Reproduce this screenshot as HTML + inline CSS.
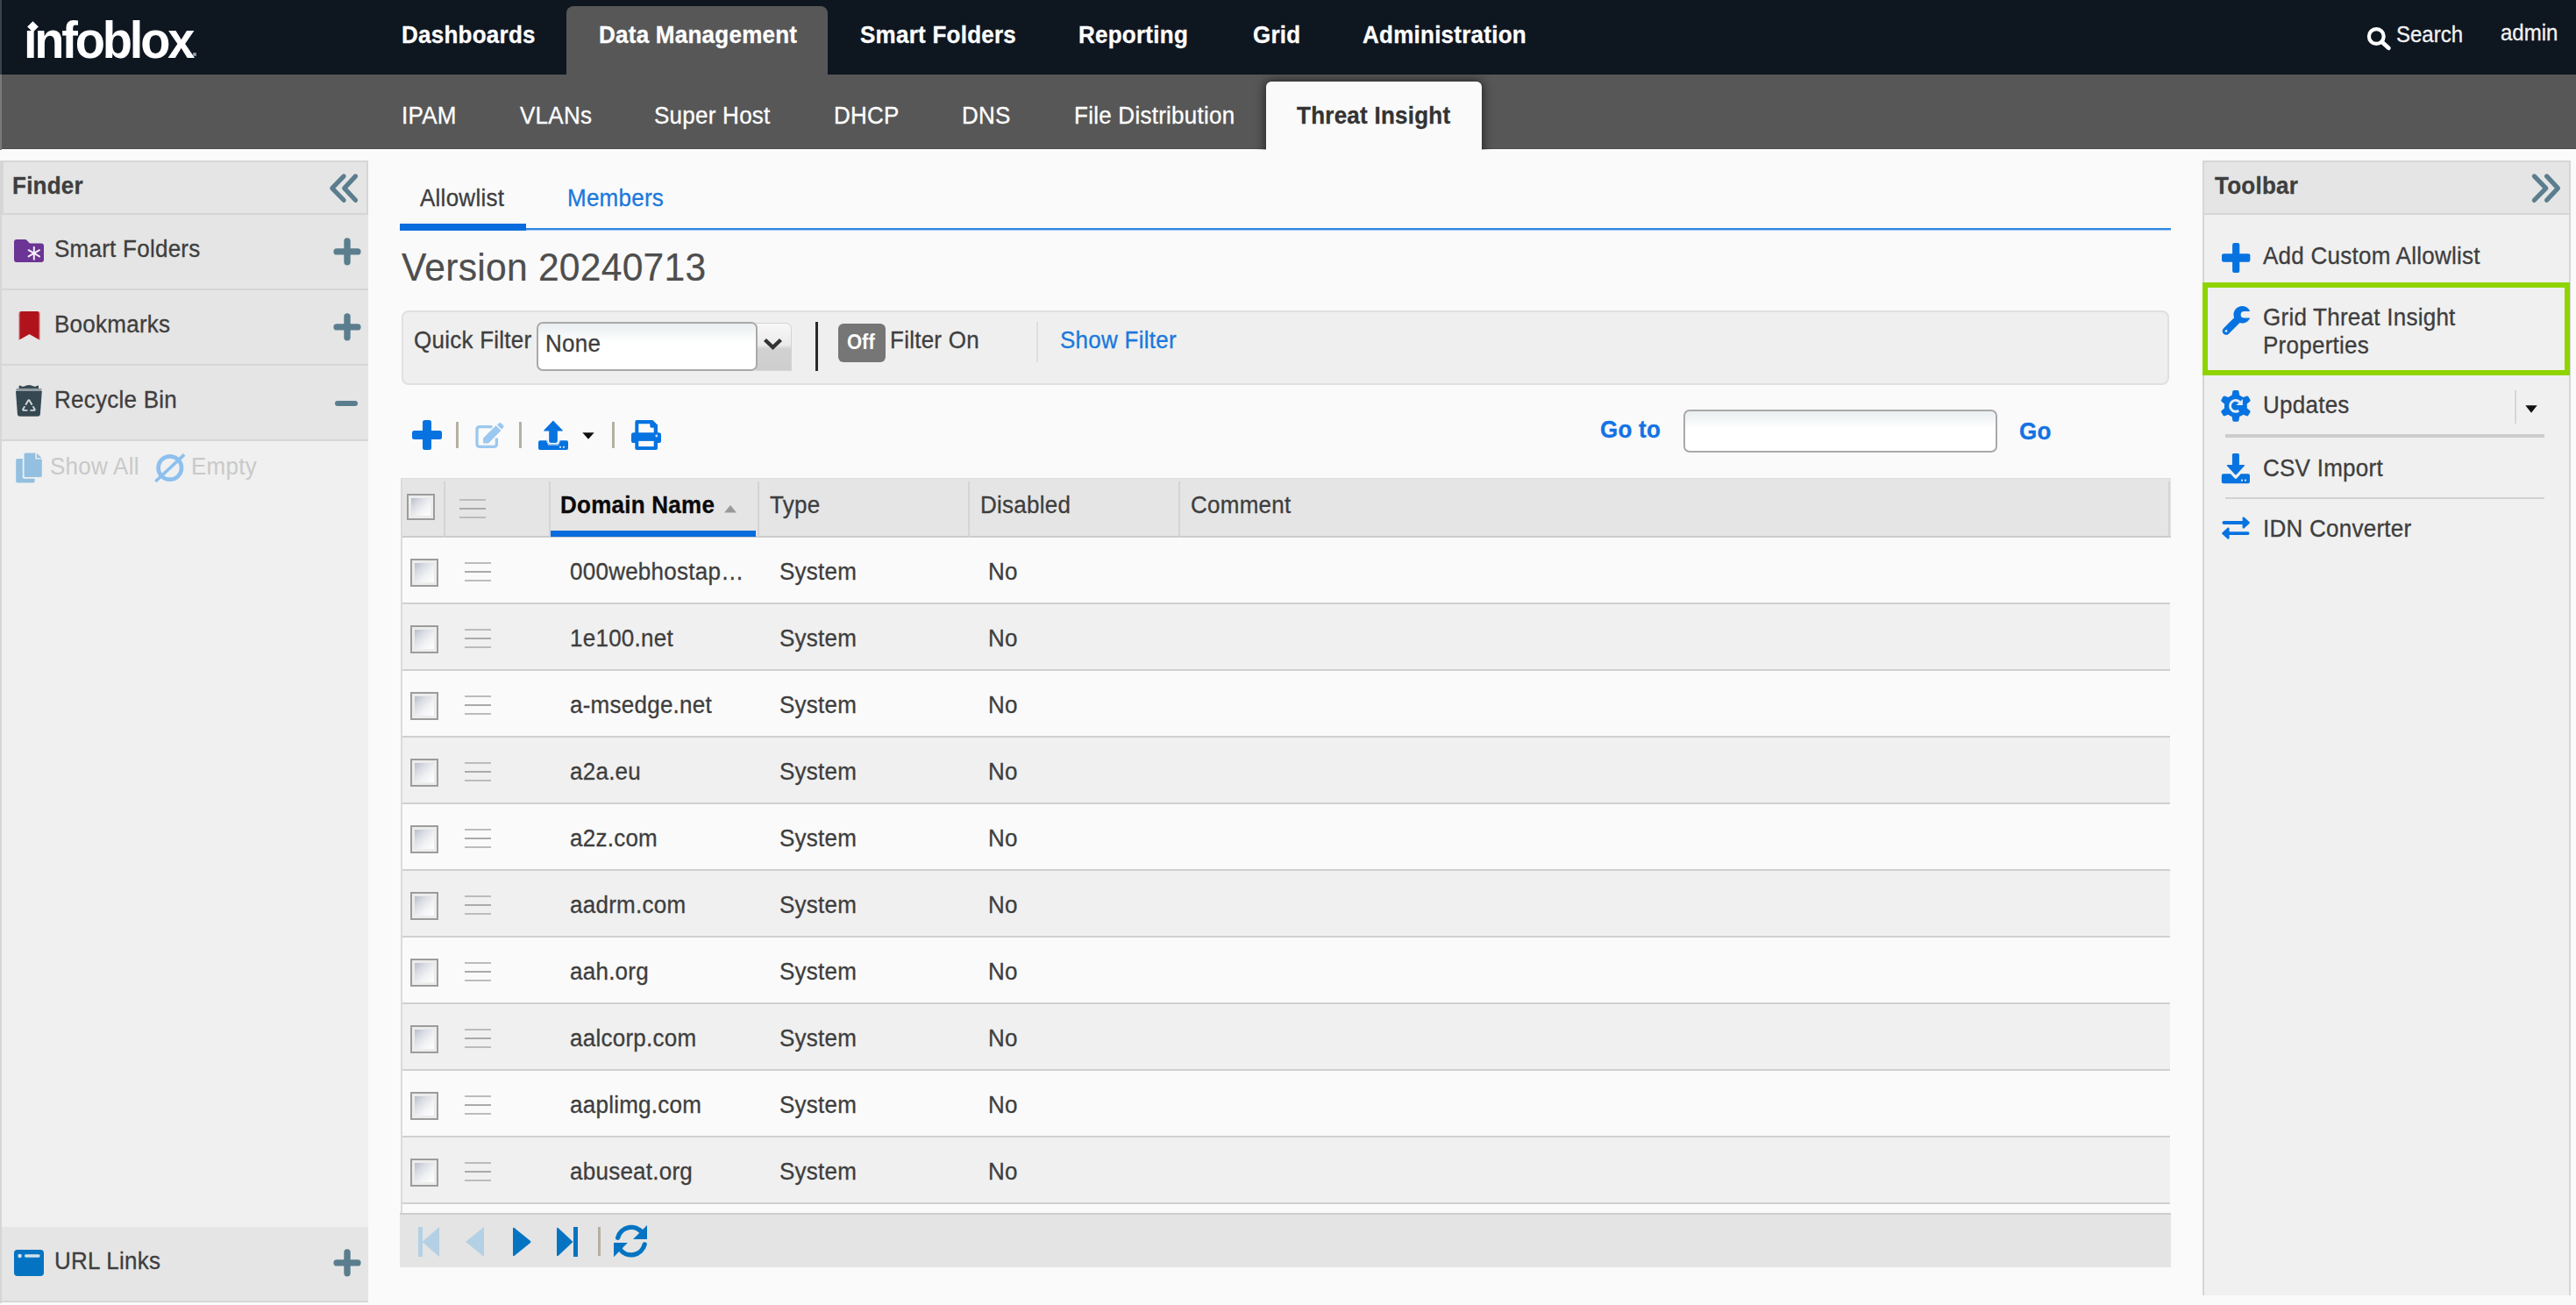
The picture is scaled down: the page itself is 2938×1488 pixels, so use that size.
<!DOCTYPE html>
<html lang="en">
<head>
<meta charset="utf-8">
<title>Infoblox - Threat Insight</title>
<style>
*{box-sizing:border-box;margin:0;padding:0}
html,body{width:2938px;height:1488px;overflow:hidden;background:#fafafa}
body{font-family:"Liberation Sans",Arial,sans-serif;font-size:26px;color:#3b3b3b;position:relative}
.a{position:absolute}
.t{position:absolute;white-space:nowrap;line-height:26px;height:26px;letter-spacing:.25px;margin-top:0;-webkit-text-stroke:.3px;transform:scaleY(1.06);transform-origin:0 22px}
.b{font-weight:bold}
svg{position:absolute;display:block;overflow:visible}
#hdr{left:0;top:0;width:2938px;height:85px;background:#0e1620}
#sub{left:0;top:85px;width:2938px;height:85px;background:#575757;border-bottom:1px solid #4b4b4b}
#edge1{left:0;top:0;width:2px;height:85px;background:#3b424c}
#edge2{left:0;top:85px;width:2px;height:86px;background:#7a7a7a}
#mtab{left:646px;top:7px;width:298px;height:80px;background:#575757;border-radius:8px 8px 0 0}
#subclip{left:0;top:85px;width:2938px;height:86px;overflow:hidden}
#stab{left:1444px;top:8px;width:246px;height:100px;background:#fafafa;border-radius:6px 6px 0 0;box-shadow:0 0 12px 1px rgba(0,0,0,.6)}
.nav{color:#fff;font-weight:bold;top:27px}
.snav{color:#fff;top:119px}
.ph{background:#e5e5e5;border:2px solid #d6d6d6}
.pb{background:#f0f0f0}
.prow{left:2px;width:418px;height:86px;background:#e5e5e5;border-bottom:2px solid #d6d6d6}
.dk{color:#3e3e3e}
.blue{color:#1a78dc}
.row{left:459px;width:2016px;height:76px;border-bottom:2px solid #d0d0d0}
.r0{background:#fafafa}.r1{background:#f0f0f0}
.cb{position:absolute;width:32px;height:32px;border:2px solid #9c9c9c;background:#ececec;padding:3px}
.cb i{display:block;width:100%;height:100%;background:linear-gradient(135deg,#b7bdc9 0%,#d9dce3 30%,#f1f2f4 62%,#ffffff 100%)}
.hb{position:absolute;width:30px;height:22px;border-top:2px solid #bcbcbc;border-bottom:2px solid #bcbcbc}
.hb:after{content:"";position:absolute;left:0;top:8px;width:30px;height:2px;background:#aaa}
.vsep{position:absolute;width:3px;background:#b5b0a2}
.cs{position:absolute;top:549px;width:2px;height:63px;background:#d4d4d4}
</style>
</head>
<body>
<div id="hdr" class="a"></div><div id="sub" class="a"></div><div id="edge1" class="a"></div><div id="edge2" class="a"></div>
<div id="mtab" class="a"></div><div id="subclip" class="a"><div id="stab" class="a"></div></div>
<div id="logo" class="t b" style="left:27px;top:15px;font-size:56px;line-height:60px;height:60px;margin-top:0;-webkit-text-stroke:0;color:#fff;letter-spacing:-3.2px">infoblox</div>
<div class="a" style="left:29px;top:22px;width:15px;height:13px;background:#0e1620"></div>
<div class="a" style="left:32.5px;top:25.5px;width:9px;height:9px;background:#fff;transform:rotate(45deg)"></div>
<div class="a" style="left:220px;top:60px;width:4px;height:4px;border-radius:1px;background:#8d9399"></div>
<div class="t nav" style="left:458px">Dashboards</div>
<div class="t nav" style="left:683px">Data Management</div>
<div class="t nav" style="left:981px">Smart Folders</div>
<div class="t nav" style="left:1230px">Reporting</div>
<div class="t nav" style="left:1429px">Grid</div>
<div class="t nav" style="left:1554px">Administration</div>
<div class="t snav" style="left:458px">IPAM</div>
<div class="t snav" style="left:593px">VLANs</div>
<div class="t snav" style="left:746px">Super Host</div>
<div class="t snav" style="left:951px">DHCP</div>
<div class="t snav" style="left:1097px">DNS</div>
<div class="t snav" style="left:1225px">File Distribution</div>
<div class="t b" style="left:1479px;top:119px;color:#333">Threat Insight</div>
<svg style="left:2699px;top:31px" width="28" height="27" viewBox="0 0 28 27"><circle cx="11.3" cy="10.5" r="8.4" fill="none" stroke="#fff" stroke-width="4.2"/><path d="M17.6 16.8 L25.3 23.8" stroke="#fff" stroke-width="4.8" stroke-linecap="round"/></svg>
<div class="t" style="left:2733px;top:27px;font-size:24px;letter-spacing:0;margin-top:0;color:#f2f2f2">Search</div>
<div class="t" style="left:2852px;top:25px;font-size:24px;letter-spacing:0;margin-top:0;color:#f2f2f2">admin</div>
<div class="a" style="left:0;top:183px;width:2px;height:1303px;background:#d6d6d6"></div>
<div class="a pb" style="left:2px;top:503px;width:418px;height:896px"></div>
<div class="a ph" style="left:2px;top:183px;width:418px;height:62px"></div>
<div class="t b dk" style="left:14px;top:199px">Finder</div>
<svg style="left:377px;top:200px" width="32" height="31" viewBox="0 0 32 31"><path d="M15.1 0.9 L1.8 14.6 L15.1 28.3 M28.5 0.9 L15.7 14.6 L28.5 28.3" fill="none" stroke="#5b7e8e" stroke-width="5.2" stroke-linejoin="round" stroke-linecap="round"/></svg>
<div class="a prow" style="top:245px"></div>
<div class="a prow" style="top:331px"></div>
<div class="a prow" style="top:417px"></div>
<div class="t dk" style="left:62px;top:271px">Smart Folders</div>
<div class="t dk" style="left:62px;top:357px">Bookmarks</div>
<div class="t dk" style="left:62px;top:443px">Recycle Bin</div>
<svg id="i-folder" style="left:16px;top:273px" width="34" height="26" viewBox="0 0 34 26"><path d="M3 0 H12.5 Q13.6 0 14.4 0.8 L17.4 4 Q18 4.6 19 4.6 H31 Q34 4.6 34 7.6 V23 Q34 26 31 26 H3 Q0 26 0 23 V3 Q0 0 3 0 Z" fill="#6c3494"/><g stroke="#f4eef8" stroke-width="2" stroke-linecap="round"><path d="M22.8 8.8 V22.8"/><path d="M16.6 12.2 L29 19.4"/><path d="M29 12.2 L16.6 19.4"/></g><circle cx="22.8" cy="15.8" r="2" fill="#f4eef8"/></svg>
<svg id="i-bookmark" style="left:20.5px;top:355px" width="25" height="33" viewBox="0 0 25 33"><path d="M3 0 H22 Q25 0 25 3 V33 L12.5 26 L0 33 V3 Q0 0 3 0 Z" fill="#d9a3a7"/><path d="M3.4 0 H21.6 Q23.6 0 23.6 2.4 V32.2 L12.5 26 L1.4 32.2 V2.4 Q1.4 0 3.4 0 Z" fill="#b0131c"/></svg>
<svg id="i-recycle" style="left:18px;top:439px" width="30" height="36" viewBox="0 0 30 36"><path d="M3.6 4 V1.2 Q4 0 5.2 0.7 Q7.5 2.2 9.5 1.5 Q12 0.1 15 -0.1 Q18 0.1 20.5 1.5 Q22.5 2.2 24.6 0.7 Q25.8 0 26 1.2 V4 Z" fill="#364852"/><rect x="0.6" y="3.9" width="28.8" height="3.4" fill="#8f9ba1"/><path d="M0 7.1 H29.8 L27.9 33 Q27.7 35.7 25 35.7 H4.8 Q2.1 35.7 1.9 33 Z" fill="#364852"/><g fill="none" stroke="#d2d8db" stroke-width="1.9" stroke-linecap="round" stroke-linejoin="round"><path d="M11.6 22 L14 17.9 Q14.9 16.7 15.8 17.9 L18.2 22"/><path d="M20 24.9 L21.5 27.4 Q22.1 28.9 20.6 28.9 H17.2"/><path d="M12.6 28.9 H9.2 Q7.7 28.9 8.3 27.4 L9.8 24.9"/></g></svg>
<svg style="left:380px;top:272px" width="31" height="31" viewBox="0 0 31 31"><path d="M16 3 V26.8 M4.1 14.9 H27.9" stroke="#5b7e8e" stroke-width="7.4" stroke-linecap="round"/></svg>
<svg style="left:380px;top:358px" width="31" height="31" viewBox="0 0 31 31"><path d="M16 3 V26.8 M4.1 14.9 H27.9" stroke="#5b7e8e" stroke-width="7.4" stroke-linecap="round"/></svg>
<svg style="left:382px;top:457px" width="26" height="6" viewBox="0 0 26 6"><path d="M3 3 H23" stroke="#5b7e8e" stroke-width="6" stroke-linecap="round"/></svg>
<svg id="i-copy" style="left:18px;top:516px" width="30" height="35" viewBox="0 0 30 35"><path d="M11 0.6 H22.5 V7.6 H29.8 V26.4 Q29.8 28 28.2 28 H11 Q9.5 28 9.5 26.4 V2.2 Q9.5 0.6 11 0.6 Z" fill="#93c0e0"/><path d="M24 0.8 L29.6 6.2 H24 Z" fill="#93c0e0"/><path d="M7.8 7 V28 Q7.8 29.7 9.5 29.7 H21.6 V32.8 Q21.6 34.4 20 34.4 H1.8 Q0.2 34.4 0.2 32.8 V8.6 Q0.2 7 1.8 7 Z" fill="#93c0e0"/></svg>
<div class="t" style="left:57px;top:519px;-webkit-text-stroke:0;color:#c9c9c9">Show All</div>
<svg id="i-empty" style="left:177px;top:517px" width="34" height="34" viewBox="0 0 34 34"><circle cx="16.8" cy="16.5" r="13.2" fill="none" stroke="#8dc0ee" stroke-width="4.7"/><path d="M0.3 32 L33.2 1.4" stroke="#8dc0ee" stroke-width="3.6" stroke-linecap="butt"/></svg>
<div class="t" style="left:218px;top:519px;-webkit-text-stroke:0;color:#c9c9c9">Empty</div>
<div class="a" style="left:2px;top:1399px;width:418px;height:86px;background:#e5e5e5;border-bottom:2px solid #d6d6d6"></div>
<svg id="i-url" style="left:16px;top:1425px" width="34" height="30" viewBox="0 0 34 30"><rect x="0" y="0" width="34" height="30" rx="4" fill="#0474c2"/><circle cx="6.6" cy="7" r="2.2" fill="#d3e1ee"/><rect x="11.9" y="5.2" width="17.8" height="3.6" rx="1.8" fill="#d3e1ee"/></svg>
<div class="t dk" style="left:62px;top:1425px">URL Links</div>
<svg style="left:380px;top:1425px" width="31" height="31" viewBox="0 0 31 31"><path d="M16 3 V26.8 M4.1 14.9 H27.9" stroke="#5b7e8e" stroke-width="7.4" stroke-linecap="round"/></svg>
<div class="t dk" style="left:479px;top:213px">Allowlist</div>
<div class="t blue" style="left:647px;top:213px">Members</div>
<div class="a" style="left:456px;top:260px;width:2020px;height:2px;background:#2f89e6"></div>
<div class="a" style="left:456px;top:262px;width:2020px;height:1px;background:#9cc5f1"></div>
<div class="a" style="left:456px;top:255px;width:144px;height:8px;background:#0a6cdc"></div>
<div class="t" style="left:458px;top:281px;font-size:42.6px;line-height:48px;height:48px;margin-top:0;-webkit-text-stroke:.2px;transform:scaleY(1.04);transform-origin:0 39px;color:#4e4e4e">Version 20240713</div>
<div class="a" style="left:458px;top:354px;width:2016px;height:85px;background:#efefef;border:2px solid #e0e0e0;border-radius:8px"></div>
<div class="t dk" style="left:472px;top:375px">Quick Filter</div>
<div class="a" style="left:862px;top:368px;width:41px;height:55px;border:1px solid #d4d4d4;border-left:0;border-radius:0 7px 0 0;background:linear-gradient(#f7f7f7 0%,#ebebeb 46%,#d2d2d2 54%,#cecece 100%)"></div>
<div class="a" style="left:612px;top:367px;width:252px;height:56px;background:linear-gradient(#e9eef0 0,#ffffff 22px);border:2px solid #a9a9a9;border-radius:7px"></div>
<div class="t dk" style="left:622px;top:379px">None</div>
<svg style="left:870px;top:385px" width="23" height="14" viewBox="0 0 23 14"><path d="M2.5 2.5 L11.5 11 L20.5 2.5" fill="none" stroke="#333" stroke-width="4.4"/></svg>
<div class="a" style="left:930px;top:367px;width:3px;height:56px;background:#2b2b2b"></div>
<div class="a" style="left:956px;top:369px;width:54px;height:44px;background:#767676;border-radius:6px"></div>
<div class="t b" style="left:966px;top:378px;font-size:22px;letter-spacing:0;margin-top:0;-webkit-text-stroke:0;color:#fff">Off</div>
<div class="t dk" style="left:1015px;top:375px">Filter On</div>
<div class="a" style="left:1182px;top:367px;width:2px;height:46px;background:#dedede"></div>
<div class="t blue" style="left:1209px;top:375px">Show Filter</div>
<svg style="left:470px;top:479px" width="34" height="34" viewBox="0 0 34 34"><rect x="12.0" y="0" width="10" height="34" rx="2.5" fill="#0673e0"/><rect x="0" y="12.0" width="34" height="10" rx="2.5" fill="#0673e0"/></svg>
<div class="vsep" style="left:520px;top:481px;height:30px"></div>
<svg id="i-edit" style="left:542px;top:481px" width="34" height="30" viewBox="0 0 34 30"><path d="M19.4 5.6 H5.2 Q2 5.6 2 8.8 V25.2 Q2 28.4 5.2 28.4 H21.2 Q24.4 28.4 24.4 25.2 V18.4" fill="none" stroke="#9bc8f0" stroke-width="3.3"/><path d="M9.6 24 V18.6 L23.7 4.8 L28.8 9.9 L15 24 Z" fill="#9bc8f0" stroke="#9bc8f0" stroke-width="1" stroke-linejoin="round"/><path d="M25 3.6 L27 1.6 Q28.3 0.4 29.6 1.6 L32 4 Q33.2 5.3 32 6.6 L30 8.6 Z" fill="#9bc8f0"/></svg>
<div class="vsep" style="left:592px;top:481px;height:30px"></div>
<svg id="i-upload" style="left:614px;top:479px" width="34" height="34" viewBox="0 0 34 34"><path d="M16.9 0.6 L27.6 11.4 Q28.4 12.6 27 12.6 H21.6 V24 Q21.6 25.8 19.8 25.8 H14.2 Q12.4 25.8 12.4 24 V12.6 H7 Q5.6 12.6 6.4 11.4 Z" fill="#0673e0"/><path d="M2 23.3 H9.6 L12 27.4 H22.2 L24.6 23.3 H32 Q34 23.3 34 25.3 V32 Q34 34 32 34 H2 Q0 34 0 32 V25.3 Q0 23.3 2 23.3 Z" fill="#0673e0" stroke="#fafafa" stroke-width="0"/><path d="M9.2 22.6 L11.6 28.2 H22.6 L25 22.6" fill="none" stroke="#a9cdf3" stroke-width="1.2"/><path d="M12.4 12.6 V24 Q12.4 25.8 14.2 25.8 H19.8 Q21.6 25.8 21.6 24 V12.6 Z" fill="#0673e0"/><circle cx="25" cy="30.8" r="1.1" fill="#dfeaf8"/><circle cx="29" cy="30.8" r="1.1" fill="#dfeaf8"/></svg>
<svg style="left:664px;top:493px" width="14" height="8" viewBox="0 0 14 8"><path d="M0.3 0.3 H13.7 L7 7.8 Z" fill="#111"/></svg>
<div class="vsep" style="left:698px;top:481px;height:30px"></div>
<svg id="i-print" style="left:720px;top:479px" width="34" height="34" viewBox="0 0 34 34"><path d="M4.3 2 Q4.3 0 6.3 0 H24.4 L30 5.6 V16 H4.3 Z" fill="#0673e0"/><path d="M8.3 4.3 H21.3 V7 Q21.3 8.7 23 8.7 H25.7 V15 H8.3 Z" fill="#fafafa"/><rect x="0" y="14.3" width="34" height="11.8" rx="2.6" fill="#0673e0"/><path d="M4.3 22 H30 V31.9 Q30 33.9 28 33.9 H6.3 Q4.3 33.9 4.3 31.9 Z" fill="#0673e0"/><rect x="8.3" y="23.9" width="17.4" height="6.2" fill="#fafafa"/><circle cx="28.8" cy="18" r="1.4" fill="#cfe2f8"/></svg>
<div class="t b" style="left:1825px;top:477px;color:#1272e4">Go to</div>
<div class="a" style="left:1920px;top:467px;width:358px;height:49px;background:linear-gradient(#e9eef0 0,#ffffff 20px);border:2px solid #a9a9a9;border-radius:7px"></div>
<div class="t b" style="left:2303px;top:479px;color:#1272e4">Go</div>
<div class="a" style="left:457px;top:545px;width:2019px;height:68px;background:#e5e5e5;border-bottom:2px solid #cbcbcb;border-top:1px solid #dedede"></div>
<div class="a" style="left:457px;top:546px;width:2px;height:837px;background:#dbdbdb"></div>
<div class="cs" style="left:506px"></div>
<div class="cs" style="left:626px"></div>
<div class="cs" style="left:864px"></div>
<div class="cs" style="left:1104px"></div>
<div class="cs" style="left:1344px"></div>
<div class="cs" style="left:2473px"></div>
<div class="a" style="left:628px;top:605px;width:234px;height:7px;background:#0a6cdc"></div>
<div class="cb" style="left:464px;top:563px;height:30px"><i></i></div>
<div class="hb" style="left:524px;top:569px"></div>
<div class="t b" style="left:639px;top:563px;color:#0a0a0a">Domain Name</div>
<svg style="left:826px;top:575.5px" width="14" height="8.5" viewBox="0 0 14 8.5"><path d="M7 0 L14 8.5 H0 Z" fill="#999"/></svg>
<div class="t dk" style="left:878px;top:563px">Type</div>
<div class="t dk" style="left:1118px;top:563px">Disabled</div>
<div class="t dk" style="left:1358px;top:563px">Comment</div>
<div class="a row r0" style="top:613px"></div><div class="cb" style="left:468px;top:637px"><i></i></div><div class="hb" style="left:530px;top:641px"></div><div class="t dk" style="left:650px;top:639px">000webhostap…</div><div class="t dk" style="left:889px;top:639px">System</div><div class="t dk" style="left:1127px;top:639px">No</div>
<div class="a row r1" style="top:689px"></div><div class="cb" style="left:468px;top:713px"><i></i></div><div class="hb" style="left:530px;top:717px"></div><div class="t dk" style="left:650px;top:715px">1e100.net</div><div class="t dk" style="left:889px;top:715px">System</div><div class="t dk" style="left:1127px;top:715px">No</div>
<div class="a row r0" style="top:765px"></div><div class="cb" style="left:468px;top:789px"><i></i></div><div class="hb" style="left:530px;top:793px"></div><div class="t dk" style="left:650px;top:791px">a-msedge.net</div><div class="t dk" style="left:889px;top:791px">System</div><div class="t dk" style="left:1127px;top:791px">No</div>
<div class="a row r1" style="top:841px"></div><div class="cb" style="left:468px;top:865px"><i></i></div><div class="hb" style="left:530px;top:869px"></div><div class="t dk" style="left:650px;top:867px">a2a.eu</div><div class="t dk" style="left:889px;top:867px">System</div><div class="t dk" style="left:1127px;top:867px">No</div>
<div class="a row r0" style="top:917px"></div><div class="cb" style="left:468px;top:941px"><i></i></div><div class="hb" style="left:530px;top:945px"></div><div class="t dk" style="left:650px;top:943px">a2z.com</div><div class="t dk" style="left:889px;top:943px">System</div><div class="t dk" style="left:1127px;top:943px">No</div>
<div class="a row r1" style="top:993px"></div><div class="cb" style="left:468px;top:1017px"><i></i></div><div class="hb" style="left:530px;top:1021px"></div><div class="t dk" style="left:650px;top:1019px">aadrm.com</div><div class="t dk" style="left:889px;top:1019px">System</div><div class="t dk" style="left:1127px;top:1019px">No</div>
<div class="a row r0" style="top:1069px"></div><div class="cb" style="left:468px;top:1093px"><i></i></div><div class="hb" style="left:530px;top:1097px"></div><div class="t dk" style="left:650px;top:1095px">aah.org</div><div class="t dk" style="left:889px;top:1095px">System</div><div class="t dk" style="left:1127px;top:1095px">No</div>
<div class="a row r1" style="top:1145px"></div><div class="cb" style="left:468px;top:1169px"><i></i></div><div class="hb" style="left:530px;top:1173px"></div><div class="t dk" style="left:650px;top:1171px">aalcorp.com</div><div class="t dk" style="left:889px;top:1171px">System</div><div class="t dk" style="left:1127px;top:1171px">No</div>
<div class="a row r0" style="top:1221px"></div><div class="cb" style="left:468px;top:1245px"><i></i></div><div class="hb" style="left:530px;top:1249px"></div><div class="t dk" style="left:650px;top:1247px">aaplimg.com</div><div class="t dk" style="left:889px;top:1247px">System</div><div class="t dk" style="left:1127px;top:1247px">No</div>
<div class="a row r1" style="top:1297px"></div><div class="cb" style="left:468px;top:1321px"><i></i></div><div class="hb" style="left:530px;top:1325px"></div><div class="t dk" style="left:650px;top:1323px">abuseat.org</div><div class="t dk" style="left:889px;top:1323px">System</div><div class="t dk" style="left:1127px;top:1323px">No</div>
<div class="a" style="left:456px;top:1383px;width:2020px;height:62px;background:#e4e4e4;border-top:2px solid #cecece"></div>
<svg style="left:477px;top:1399px" width="24" height="34" viewBox="0 0 24 34"><path d="M0 0 H5 V34 H0 Z M24 0 V34 L4.5 17 Z" fill="#b4d0e4"/></svg>
<svg style="left:531px;top:1399px" width="21" height="34" viewBox="0 0 21 34"><path d="M21 0 V34 L0 17 Z" fill="#b4d0e4"/></svg>
<svg style="left:585px;top:1399px" width="21" height="34" viewBox="0 0 21 34"><path d="M0 2 Q0 0 1.8 1.2 L20 16 Q21 17 20 18 L1.8 32.8 Q0 34 0 32 Z" fill="#0474c2"/></svg>
<svg style="left:635px;top:1399px" width="24" height="34" viewBox="0 0 24 34"><path d="M19 0 H24 V34 H19 Z M0 2 Q0 0 1.8 1.2 L18.5 17 L1.8 32.8 Q0 34 0 32 Z" fill="#0474c2"/></svg>
<div class="vsep" style="left:682px;top:1399px;height:33px"></div>
<svg id="i-refresh" style="left:700px;top:1396px" width="38" height="38" viewBox="0 0 38 38"><g fill="none" stroke="#0474c2" stroke-width="5.3" stroke-linecap="round"><path d="M4.6 15.3 A15.8 15.8 0 0 1 32.8 10"/><path d="M35.2 22.9 A15.8 15.8 0 0 1 7 28.2"/></g><path d="M38 1 V16.9 H22 L28.5 10.5 Z" fill="#0474c2"/><path d="M0 37.2 V21.1 H15.9 L9.5 27.5 Z" fill="#0474c2"/></svg>
<div class="a pb" style="left:2512px;top:245px;width:420px;height:1232px;border-left:2px solid #d6d6d6;border-right:2px solid #d6d6d6"></div>
<div class="a ph" style="left:2512px;top:183px;width:420px;height:62px"></div>
<div class="t b dk" style="left:2526px;top:199px">Toolbar</div>
<svg style="left:2887px;top:200px" width="32" height="31" viewBox="0 0 32 31"><path d="M3.4 0.9 L16.8 14.6 L3.4 28.3 M17.6 0.9 L30.4 14.6 L17.6 28.3" fill="none" stroke="#5b7e8e" stroke-width="5.2" stroke-linejoin="round" stroke-linecap="round"/></svg>
<svg style="left:2533.8px;top:276.8px" width="32.4" height="34" viewBox="0 0 32.4 34"><rect x="12.1" y="0" width="8.2" height="34" rx="2.2" fill="#0673e0"/><rect x="0" y="12.3" width="32.4" height="9.4" rx="2.2" fill="#0673e0"/></svg>
<div class="t dk" style="left:2581px;top:279px">Add Custom Allowlist</div>
<div class="a" style="left:2512px;top:322px;width:419px;height:106px;border:6px solid #8fd400"></div>
<svg id="i-wrench" style="left:2533px;top:349px" width="34" height="34" viewBox="0 0 34 34"><path d="M6 28.5 L19.5 15" stroke="#0673e0" stroke-width="8.7" stroke-linecap="round"/><path d="M33.2 5.92 A9.77 9.77 0 1 0 33.2 13.62 H26.5 A3.85 3.85 0 0 1 26.5 5.92 Z" fill="#0673e0"/><circle cx="6" cy="28.5" r="1.4" fill="#cfe2f8"/></svg>
<div class="t dk" style="left:2581px;top:349px">Grid Threat Insight</div>
<div class="t dk" style="left:2581px;top:381px">Properties</div>
<svg id="i-gear" style="left:2533px;top:445px" width="34" height="36" viewBox="0 0 34 36"><g fill="#0673e0"><circle cx="16.9" cy="17.9" r="13"/><path d="M13.2 2 Q13.2 0.1 15 0.1 H18.8 Q20.6 0.1 20.6 2 L21.6 8 H12.2 Z M13.2 33.8 Q13.2 35.7 15 35.7 H18.8 Q20.6 35.7 20.6 33.8 L21.6 28 H12.2 Z" transform="rotate(0 16.9 17.9)"/><path d="M13.2 2 Q13.2 0.1 15 0.1 H18.8 Q20.6 0.1 20.6 2 L21.6 8 H12.2 Z M13.2 33.8 Q13.2 35.7 15 35.7 H18.8 Q20.6 35.7 20.6 33.8 L21.6 28 H12.2 Z" transform="rotate(60 16.9 17.9)"/><path d="M13.2 2 Q13.2 0.1 15 0.1 H18.8 Q20.6 0.1 20.6 2 L21.6 8 H12.2 Z M13.2 33.8 Q13.2 35.7 15 35.7 H18.8 Q20.6 35.7 20.6 33.8 L21.6 28 H12.2 Z" transform="rotate(120 16.9 17.9)"/></g><path d="M20.3 23.3 A6.4 6.4 0 1 1 21.6 13.5" fill="none" stroke="#e3edf9" stroke-width="2.8"/><path d="M24.9 9.9 V16.9 H17.4 Z" fill="#e3edf9"/></svg>
<div class="t dk" style="left:2581px;top:449px">Updates</div>
<div class="a" style="left:2868px;top:445px;width:2px;height:38px;background:#d6d6d6"></div>
<svg style="left:2880px;top:462px" width="14" height="9" viewBox="0 0 14 9"><path d="M0.3 0.3 H13.7 L7 8.8 Z" fill="#111"/></svg>
<div class="a" style="left:2538px;top:495px;width:364px;height:4px;background:#cdcdcd"></div>
<svg id="i-dl" style="left:2533px;top:517px" width="34" height="34" viewBox="0 0 34 34"><path d="M14.4 0.1 H19.4 Q20.9 0.1 20.9 1.6 V13 H26.2 Q27.8 13 26.8 14.3 L17.6 24.2 Q16.9 24.9 16.2 24.2 L7 14.3 Q6 13 7.6 13 H12.9 V1.6 Q12.9 0.1 14.4 0.1 Z" fill="#0673e0"/><path d="M2.8 23.3 H11 L15.6 28.2 Q16.9 29.4 18.2 28.2 L22.8 23.3 H31 Q33 23.3 33 25.3 V32.2 Q33 34.2 31 34.2 H2.8 Q0.8 34.2 0.8 32.2 V25.3 Q0.8 23.3 2.8 23.3 Z" fill="#0673e0"/><circle cx="24" cy="30.7" r="1.1" fill="#dfeaf8"/><circle cx="28" cy="30.7" r="1.1" fill="#dfeaf8"/></svg>
<div class="t dk" style="left:2581px;top:521px">CSV Import</div>
<div class="a" style="left:2538px;top:567px;width:364px;height:2px;background:#d2d2d2"></div>
<svg id="i-idn" style="left:2534px;top:589px" width="32" height="27" viewBox="0 0 32 27"><g fill="#0673e0" stroke="#0673e0" stroke-linejoin="round" stroke-linecap="round"><path d="M2.4 7 H25" fill="none" stroke-width="3.8"/><path d="M24.8 1.6 L30.6 7 L24.8 12.4 Z" stroke-width="2.4"/><path d="M29.6 19.1 H7" fill="none" stroke-width="3.8"/><path d="M7.4 13.7 L1.4 19.1 L7.4 24.5 Z" stroke-width="2.4"/></g></svg>
<div class="t dk" style="left:2581px;top:590px">IDN Converter</div>
</body>
</html>
